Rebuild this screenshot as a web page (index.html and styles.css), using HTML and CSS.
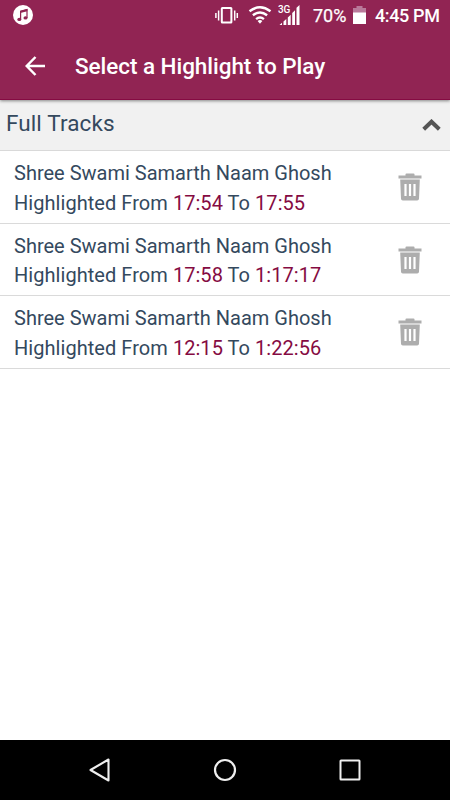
FILE: index.html
```
<!DOCTYPE html>
<html lang="en">
<head>
<meta charset="utf-8">
<title>Select a Highlight to Play</title>
<link rel="stylesheet" href="styles.css">
</head>
<body>
<svg class="defs" width="0" height="0" aria-hidden="true">
  <symbol id="trash" viewBox="0 0 24 28">
    <path fill="#adadad" fill-rule="evenodd" d="M.5 2.500h7V1.300Q7.500.5 8.500.5h7q1 0 1 .8v1.200h7v3H.5zM2.200 6.500h19.600l-.8 19.300q-.1 1.700-1.800 1.700H4.800Q3.100 27.500 3 25.800zM6.400 11v12h2.200V11zM10.900 11v12h2.200V11zM15.400 11v12h2.200V11z"/>
  </symbol>
</svg>
<div class="screen">
  <div class="status">
    <svg class="music" width="22" height="22" viewBox="0 0 22 22"><circle cx="11" cy="11" r="10" fill="#fff"/><path d="M8.600 15.300V7.200L15 5.600v8.300" fill="none" stroke="#912453" stroke-width="1.200"/><path d="M8.200 6.900 15.400 5v2.300L8.200 9.100z" fill="#912453"/><ellipse cx="7.300" cy="15.400" rx="2" ry="1.600" fill="#912453"/><ellipse cx="13.500" cy="13.900" rx="2" ry="1.600" fill="#912453"/></svg>
    <svg class="vibrate" width="24" height="18" viewBox="0 0 24 18"><rect x="6.800" y="1" width="9.600" height="14.500" rx=".5" fill="none" stroke="#fff" stroke-width="2"/><path d="M3.600 3.500v10M19.700 3.500v10M.9 6v5M22.300 6v5" stroke="#fff" stroke-width="1.500"/></svg>
    <svg class="wifi" width="24" height="18" viewBox="0 0 24 18"><g fill="none" stroke="#fff" stroke-width="2.400"><path d="M1.500 5.300Q12 -2.700 22.500 5.300"/><path d="M4.900 9.300Q12 3.700 19.100 9.300"/><path d="M8.100 13.100Q12 9.900 15.900 13.100"/></g><path d="M9.600 15Q12 13.200 14.400 15L12 17.800z" fill="#fff"/></svg>
    <div class="cell"><span class="net">3G</span><svg width="22" height="21" viewBox="0 0 22 21"><path fill="#fff" d="M1.500 20l2.500-2.200V20zM5.500 16.500 8.300 14v6H5.500zM9.800 12.500l2.900-2.700V20H9.800zM14.200 8 17 5.200V20h-2.800zM18.500 2.800 21.500 0v20h-3z"/></svg></div>
    <span class="pct">70%</span>
    <svg class="battery" width="13" height="18" viewBox="0 0 13 18"><path d="M0 2h3.500V0h6v2H13v5H0z" fill="#b9799a"/><path d="M0 6.500h13V18H0z" fill="#fff"/></svg>
    <span class="clock">4:45 PM</span>
  </div>
  <header class="toolbar">
    <svg class="back" width="20" height="20" viewBox="0 0 20 20"><path d="M10.500 1 1.700 10l8.800 9M1.700 10H20" fill="none" stroke="#fff" stroke-width="2.500"/></svg>
    <h1>Select a Highlight to Play</h1>
  </header>
  <main>
    <div class="group"><h2>Full Tracks</h2><svg width="19" height="12" viewBox="0 0 19 12"><path d="M1.700 10.300 9.500 2.700l7.800 7.600" fill="none" stroke="#555" stroke-width="4"/></svg></div>
    <div class="row"><div class="info"><p class="name">Shree Swami Samarth Naam Ghosh</p><p class="range">Highlighted From <b>17:54</b> To <b>17:55</b></p></div><svg class="trash" width="24" height="28"><use href="#trash"/></svg></div>
    <div class="row"><div class="info"><p class="name">Shree Swami Samarth Naam Ghosh</p><p class="range">Highlighted From <b>17:58</b> To <b>1:17:17</b></p></div><svg class="trash" width="24" height="28"><use href="#trash"/></svg></div>
    <div class="row"><div class="info"><p class="name">Shree Swami Samarth Naam Ghosh</p><p class="range">Highlighted From <b>12:15</b> To <b>1:22:56</b></p></div><svg class="trash" width="24" height="28"><use href="#trash"/></svg></div>
  </main>
  <nav class="nav">
    <svg width="24" height="26" viewBox="0 0 24 26"><path d="M2.500 13 20.500 2.500v21z" fill="none" stroke="#eee" stroke-width="2.100" stroke-linejoin="round"/></svg>
    <svg width="24" height="24" viewBox="0 0 24 24"><circle cx="12" cy="12" r="10" fill="none" stroke="#eee" stroke-width="2.200"/></svg>
    <svg width="24" height="24" viewBox="0 0 24 24"><rect x="2.500" y="2.500" width="19" height="19" rx=".5" fill="none" stroke="#eee" stroke-width="2"/></svg>
  </nav>
</div>
</body>
</html>
```
FILE: styles.css
```
* { box-sizing: border-box; margin: 0; padding: 0; }
body { font-family: Roboto, "Liberation Sans", sans-serif; background: #fff; }
svg { display: block; flex: none; }
.defs { position: absolute; }
.screen { width: 450px; height: 800px; display: flex; flex-direction: column; overflow: hidden; }
.status { position: relative; z-index: 2; height: 32px; flex: none; background: #912453; color: #fff; display: flex; align-items: flex-start; padding-left: 12px; white-space: nowrap; font-size: 18px; font-weight: 500; line-height: 32px; }
.music { margin-top: 4px; }
.vibrate { margin: 7px 0 0 181px; }
.wifi { margin: 6px 0 0 9px; }
.cell { position: relative; margin: 5px 0 0 6px; width: 23px; }
.net { position: absolute; left: 0; top: 0; font-size: 10px; line-height: 9px; font-weight: 500; letter-spacing: -.3px; }
.pct { width: 34px; margin-left: 12px; font-weight: 400; -webkit-text-stroke: .25px #fff; }
.battery { margin: 6px 0 0 6px; }
.clock { margin-left: 9px; letter-spacing: -.37px; }
.toolbar { height: 68px; flex: none; background: #912453; border-bottom: 1px solid #850b42; box-shadow: 0 1px 3px rgba(0,0,0,.45); display: flex; align-items: center; padding-left: 25px; color: #fff; position: relative; z-index: 1; }
.toolbar h1 { margin-left: 30px; font-size: 22.500px; font-weight: 500; line-height: 30px; letter-spacing: -.05px; white-space: nowrap; }
main { flex: 1; background: #fff; }
.group { height: 51px; background: #f1f1f1; border-bottom: 1px solid #d9d9d9; display: flex; justify-content: space-between; align-items: center; padding: 0 9px 0 6px; }
.group h2 { font-size: 22.500px; font-weight: 400; color: #34495e; line-height: 30px; letter-spacing: .1px; margin-bottom: 5px; }
.row { height: 72.600px; border-bottom: 1px solid #dadada; display: flex; justify-content: space-between; padding: 8px 28px 0 14px; color: #34495e; }
.info p { font-size: 20px; line-height: 29.300px; white-space: nowrap; }
.info .range { letter-spacing: .05px; position: relative; top: .5px; }
.info b { font-weight: 400; color: #850b42; }
.trash { margin-top: 14px; }
.nav { height: 60px; flex: none; background: #000; display: flex; justify-content: space-between; align-items: center; padding: 0 88px; }
```
